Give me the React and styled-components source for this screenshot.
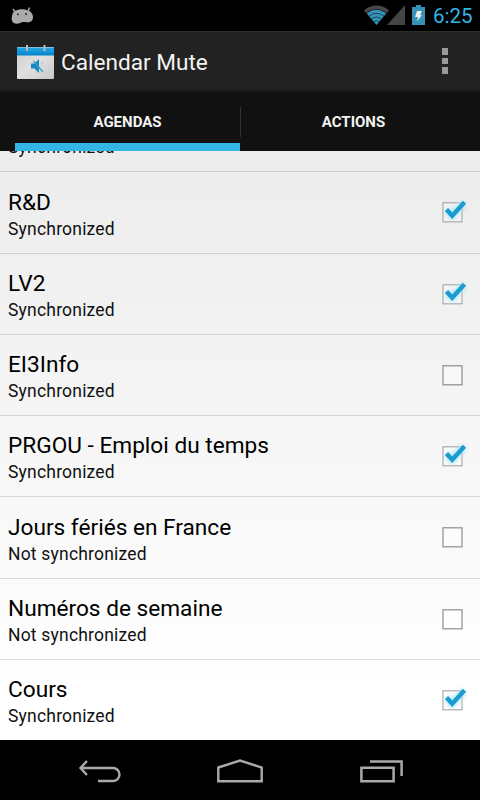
import React, { useState } from "react";
import styled, { createGlobalStyle } from "styled-components";

const GlobalStyle = createGlobalStyle`
  body {
    margin: 0;
    background: #000;
  }

  svg {
    display: block;
  }
`;

// Styled components
const Screen = styled.div`
  display: flex;
  flex-direction: column;
  width: 480px;
  height: 800px;
  overflow: hidden;
  background: #000;
  color: #000;
  font-family: Roboto, sans-serif;
`;

const StatusBar = styled.div`
  display: flex;
  align-items: center;
  flex: 0 0 31px;
  box-sizing: border-box;
  padding: 0 7px 0 0;
  background: #000;
`;

const StatusIcons = styled.div`
  margin-left: auto;
`;

const Clock = styled.span`
  width: 40px;
  margin-left: 7px;
  padding-top: 2px;
  color: #33b5e5;
  font-size: 20.5px;
  line-height: 29px;
  white-space: nowrap;
`;

const ActionBar = styled.header`
  display: flex;
  align-items: center;
  flex: 0 0 61px;
  box-sizing: border-box;
  padding: 0 32px 0 16px;
  background: #222;
  border-top: 1px solid #2c2c2c;
  border-bottom: 2px solid #1a1a1a;
`;

const Title = styled.h1`
  flex: 1;
  margin: 0 0 0 5px;
  padding-top: 3px;
  color: #f3f3f3;
  font-size: 22.6px;
  font-weight: 400;
  line-height: 30px;
`;

const MenuButton = styled.button`
  display: grid;
  gap: 3px;
  padding: 0;
  border: none;
  background: none;
`;

const MenuDot = styled.span`
  width: 6.5px;
  height: 6.5px;
  background: #999;
`;

const Tabs = styled.nav`
  display: flex;
  align-items: stretch;
  flex: 0 0 59px;
  box-sizing: border-box;
  padding: 0 14px 0 15px;
  background: #111;
`;

const Tab = styled.button`
  flex: 1;
  padding: 8px 0 0;
  border: none;
  border-bottom: 8px solid ${(props) => (props.$active ? "#33b5e5" : "#111")};
  background: #111;
  color: #f3f3f3;
  font-family: inherit;
  font-size: 15px;
  font-weight: 700;
  line-height: 18px;
`;

const TabDivider = styled.span`
  align-self: center;
  flex: 0 0 1px;
  height: 30px;
  background: #333;
`;

const AgendaList = styled.main`
  display: flex;
  flex-direction: column;
  justify-content: flex-end;
  flex: 0 0 589px;
  overflow: hidden;
  background: linear-gradient(#ececec, #fff 92%);
`;

const AgendaRow = styled.div`
  display: flex;
  align-items: center;
  flex: 0 0 81.25px;
  box-sizing: border-box;
  padding: 2px 12px 0 8px;
  border-top: 1px solid rgba(0, 0, 0, 0.13);
`;

const AgendaText = styled.div`
  flex: 1;
  padding-top: 1.4px;
`;

const AgendaName = styled.div`
  height: 29px;
  font-size: 22.65px;
  line-height: 30px;
`;

const AgendaStatus = styled.div`
  color: #111;
  font-size: 17.5px;
  letter-spacing: 0.2px;
  line-height: 24px;
`;

const CheckButton = styled.button`
  padding: 0;
  border: none;
  background: none;
`;

const NavBar = styled.footer`
  display: flex;
  align-items: center;
  justify-content: space-between;
  flex: 0 0 60px;
  box-sizing: border-box;
  padding: 4px 77px 0 77px;
  background: #000;
`;

const AGENDAS = [
  { name: "", synced: true, muted: false },
  { name: "R&D", synced: true, muted: true },
  { name: "LV2", synced: true, muted: true },
  { name: "EI3Info", synced: true, muted: false },
  { name: "PRGOU - Emploi du temps", synced: true, muted: true },
  { name: "Jours fériés en France", synced: false, muted: false },
  { name: "Numéros de semaine", synced: false, muted: false },
  { name: "Cours", synced: true, muted: true },
];

function DroidIcon() {
  return (
    <svg width="36" height="31" viewBox="0 0 36 31">
      <path d="M13 9l2 3M29.500 7.500l-1.500 4" stroke="#aaa" strokeWidth="1.4" />
      <path
        d="M15 10.800c4-2.200 10-2.200 14 0 3 1.800 4.200 4.500 4 7-.2 3-2.500 4.600-5 4.600-2 0-3-.6-5-.4s-3 1.700-6.500 1.700c-3.500 0-5-2.500-4.800-5.400.2-3.300 1-6 3.300-7.500z"
        fill="#aaa"
      />
      <circle cx="18" cy="14.300" r="0.900" fill="#111" />
      <circle cx="26" cy="14" r="0.900" fill="#111" />
    </svg>
  );
}

function SignalIcons() {
  return (
    <svg width="62" height="31" viewBox="364 0 62 31">
      <path
        d="M364 10.500a18 18 0 0 1 25 0l-2.400 2.800a14.500 14.500 0 0 0-20.200 0z"
        fill="#484848"
      />
      <path
        d="M366.800 13.600a14 14 0 0 1 19.400 0L376.500 25z"
        fill="#3693b8"
      />
      <path
        d="M369 16.300a11 11 0 0 1 15 0M371.300 19.200a7.500 7.500 0 0 1 10.400 0M373.700 22.100a4 4 0 0 1 5.600 0"
        fill="none"
        stroke="#0d2c3a"
        strokeWidth="0.8"
      />
      <path d="M405 5v20h-18z" fill="#444" />
      <path d="M412 7h4V5h5v2h4v18h-13z" fill="#3693b8" />
      <path d="M417 11h5l-2 4h2l-5 6.500 1-4.500h-3z" fill="#eee" />
    </svg>
  );
}

function CalendarLogo() {
  return (
    <svg width="40" height="38" viewBox="0 0 40 38">
      <defs>
        <linearGradient id="logoPage" x1="0" y1="0" x2="1" y2="1">
          <stop offset="0" stopColor="#ccc" />
          <stop offset="0.5" stopColor="#e0e0e0" />
          <stop offset="1" stopColor="#c8c8c8" />
        </linearGradient>
        <linearGradient id="logoBand" x1="0" y1="0" x2="0" y2="1">
          <stop offset="0" stopColor="#28a9e5" />
          <stop offset="1" stopColor="#0783cb" />
        </linearGradient>
      </defs>
      <rect x="1" y="5" width="37" height="32" rx="1" fill="url(#logoPage)" />
      <path d="M1 5.500h37v8H1z" fill="url(#logoBand)" />
      <path d="M11 3v6M28.500 3v6" stroke="#bbb" strokeWidth="2" />
      <path d="M15 21.500h3.500l4.500-4.500v14l-4.500-4.500H15z" fill="#168bc3" />
      <path d="M17.500 19l9.500 11" stroke="#2f9dd0" strokeWidth="1.300" />
      <path d="M25 22l2-1.500" stroke="#8cc4dd" strokeWidth="1" />
    </svg>
  );
}

function CheckIcon({ checked }) {
  return (
    <svg width="30" height="36" viewBox="0 0 30 36">
      <rect
        x="5"
        y="7.800"
        width="19"
        height="19"
        fill="rgba(255,255,255,0.35)"
        stroke={checked ? "#aaa" : "#8d8d8d"}
        strokeWidth="1.2"
      />
      {checked && (
        <>
          <defs>
            <filter id="checkGlow" x="-50%" y="-50%" width="200%" height="200%">
              <feGaussianBlur stdDeviation="2" />
            </filter>
          </defs>
          <path
            d="M9 15l5 5.500L26 8"
            fill="none"
            stroke="#aee4fa"
            strokeWidth="7"
            filter="url(#checkGlow)"
          />
          <path
            d="M8.500 14.500l5.700 6.200L26.500 7.300"
            fill="none"
            stroke="#1b9ccf"
            strokeWidth="4.4"
          />
        </>
      )}
    </svg>
  );
}

function BackIcon() {
  return (
    <svg width="44" height="26" viewBox="0 0 44 26">
      <path
        d="M10 2L3.500 9l6.500 7M3.500 9H36a6.500 6.500 0 0 1 0 13H21"
        fill="none"
        stroke="#aaa"
        strokeWidth="2.4"
      />
    </svg>
  );
}

function HomeIcon() {
  return (
    <svg width="48" height="26" viewBox="0 0 48 26">
      <path
        d="M2.300 8.500L24 1.500l21.700 7v13.700H2.300z"
        fill="none"
        stroke="#aaa"
        strokeWidth="2.4"
      />
    </svg>
  );
}

function RecentsIcon() {
  return (
    <svg width="44" height="26" viewBox="0 0 44 26">
      <path
        d="M2.400 8.700h32.200v13.500H2.400zM11 2.500h31.600V17"
        fill="none"
        stroke="#aaa"
        strokeWidth="2.5"
      />
    </svg>
  );
}

function App() {
  const [agendas, setAgendas] = useState(AGENDAS);
  const [activeTab, setActiveTab] = useState("AGENDAS");

  const toggleAgenda = (name) => {
    setAgendas(
      agendas.map((agenda) =>
        agenda.name === name ? { ...agenda, muted: !agenda.muted } : agenda
      )
    );
  };

  return (
    <>
      <GlobalStyle />
      <Screen>
        <StatusBar>
          <DroidIcon />
          <StatusIcons>
            <SignalIcons />
          </StatusIcons>
          <Clock>6:25</Clock>
        </StatusBar>

        <ActionBar>
          <CalendarLogo />
          <Title>Calendar Mute</Title>
          <MenuButton aria-label="Menu">
            <MenuDot />
            <MenuDot />
            <MenuDot />
          </MenuButton>
        </ActionBar>

        <Tabs>
          <Tab
            $active={activeTab === "AGENDAS"}
            onClick={() => setActiveTab("AGENDAS")}
          >
            AGENDAS
          </Tab>
          <TabDivider />
          <Tab
            $active={activeTab === "ACTIONS"}
            onClick={() => setActiveTab("ACTIONS")}
          >
            ACTIONS
          </Tab>
        </Tabs>

        <AgendaList>
          {agendas.map((agenda) => (
            <AgendaRow key={agenda.name}>
              <AgendaText>
                <AgendaName>{agenda.name}</AgendaName>
                <AgendaStatus>
                  {agenda.synced ? "Synchronized" : "Not synchronized"}
                </AgendaStatus>
              </AgendaText>
              <CheckButton
                aria-label={agenda.name}
                onClick={() => toggleAgenda(agenda.name)}
              >
                <CheckIcon checked={agenda.muted} />
              </CheckButton>
            </AgendaRow>
          ))}
        </AgendaList>

        <NavBar>
          <BackIcon />
          <HomeIcon />
          <RecentsIcon />
        </NavBar>
      </Screen>
    </>
  );
}

export default App;
